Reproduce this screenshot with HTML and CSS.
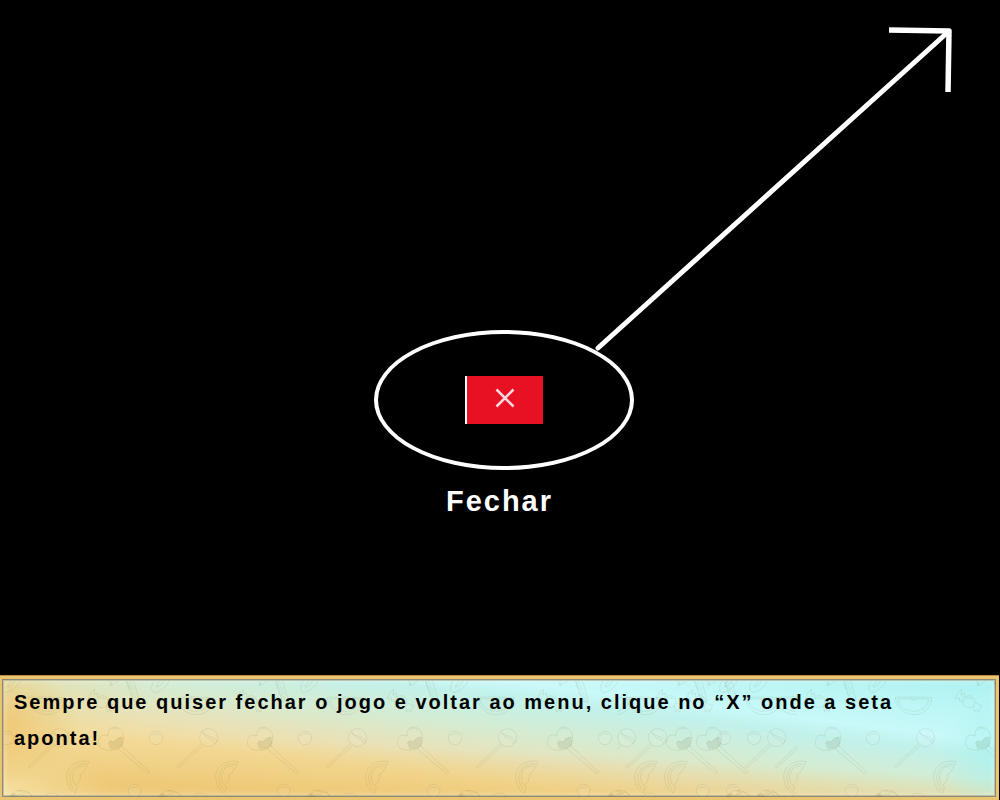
FILE: index.html
```html
<!DOCTYPE html>
<html lang="pt">
<head>
<meta charset="utf-8">
<meta name="viewport" content="width=device-width, initial-scale=1">
<title>Fechar</title>
<link rel="stylesheet" href="styles.css">
</head>
<body>
<main class="screen">
  <svg class="arrow" viewBox="0 0 370 350" aria-hidden="true">
    <path d="M8 338 358 22" stroke-width="5" stroke-linecap="round"/>
    <path d="M299 20 359 21 358 82" stroke-width="5.5" stroke-linejoin="round"/>
  </svg>
  <section class="demo">
    <div class="ring">
      <button class="close" type="button" aria-labelledby="close-label">
        <svg class="cross" viewBox="0 0 20 20" aria-hidden="true"><path d="M1.5 1.5 18.5 18.5M18.5 1.5 1.5 18.5"/></svg>
      </button>
    </div>
    <h1 class="label" id="close-label">Fechar</h1>
  </section>
  <section class="panel">
    <svg class="sweets" aria-hidden="true">
      <defs>
        <clipPath id="clip-left"><rect x="4" y="5" width="793" height="116"/></clipPath>
        <clipPath id="clip-right"><rect x="617" y="5" width="378" height="116"/></clipPath>
        <g id="sweet" transform="scale(.3333) translate(0 -33)">
          <path class="fill" d="M325 236Q330 222 341 232Q349 218 367 216Q372 233 366 246Q359 242 357 252Q350 246 346 254Q340 248 335 254Q328 249 327 242Z"/>
          <path d="M325 204C326 178 363 181 370 209C374 230 366 249 344 254C322 260 293 252 295 231C297 211 310 207 325 213Q322 208 325 204ZM325 236Q330 222 341 232Q349 218 367 216M332 195Q343 183 355 195M354 251 443 326 449 321 365 243"/>
          <circle class="shine" cx="468" cy="219" r="20"/><path d="M455 211Q465 201 478 209"/>
          <circle class="shine" cx="626" cy="218" r="27"/><path d="M607 199C616 219 646 209 650 232M610 204C619 226 640 216 644 237M605 236 532 304 536 309 610 241"/>
          <path d="M268 290C225 281 195 310 201 345C203 363 214 378 226 384L232 367 229 359 238 350 242 335 240 329 249 324ZM260 297C225 292 206 320 210 345Q213 364 223 373M252 303C229 302 214 321 218 342Q219 354 226 361"/>
          <circle class="shine" cx="404" cy="377" r="19"/><path d="M391 371Q402 362 413 368"/>
          <path d="M484 398C484 374 509 370 520 385Q530 371 545 398M503 379Q521 370 544 393M494 397Q505 382 519 390M583 394Q589 380 602 386Q615 381 621 395"/>
          <path class="fill" d="M475 392 482 385 490 384 498 391 496 397H475Z"/>
          <path d="M373 28 395 94Q403 121 418 107L395 28M379 49 402 74M381 61 407 88M390 83 411 101M397 97 416 112M374 36 397 58"/>
          <path d="M456 76C449 55 477 22 501 36C520 49 485 78 469 82Q460 85 456 76ZM469 65Q475 45 492 44Q491 56 475 65Z"/>
          <path d="M325 42 333 62 357 47 344 37M333 62 336 49"/>
          <circle cx="306" cy="110" r="18"/><path d="M293 96 292 84 282 90 284 74 274 81 268 94 264 100 279 101 276 108 289 109M320 122 322 141 330 134 334 142 344 122 326 114M294 102Q304 94 315 101"/>
          <path d="M85 97Q139 94 194 98C191 166 93 166 85 97ZM93 102Q139 99 185 103C180 151 101 151 93 102ZM133 99 136 107 142 107 145 99"/>
        </g>
      </defs>
      <g clip-path="url(#clip-left)">
        <use href="#sweet" x="-149"/><use href="#sweet"/><use href="#sweet" x="149"/><use href="#sweet" x="299"/><use href="#sweet" x="449"/><use href="#sweet" x="598"/><use href="#sweet" x="748"/>
      </g>
      <g clip-path="url(#clip-right)">
        <use href="#sweet" x="418"/><use href="#sweet" x="568"/><use href="#sweet" x="717"/><use href="#sweet" x="867"/>
      </g>
    </svg>
    <p class="message">Sempre que quiser fechar o jogo e voltar ao menu, clique no “X” onde a seta aponta!</p>
  </section>
</main>
</body>
</html>
```
FILE: styles.css
```css
* { box-sizing: border-box; }

body {
  margin: 0;
  background: #000;
  font-family: "Liberation Sans", Arial, sans-serif;
  font-weight: 700;
}

.screen {
  position: relative;
  display: flex;
  flex-direction: column;
  min-height: 100vh;
  padding-right: 1px;
}

.arrow {
  position: absolute;
  top: 10px;
  right: 40px;
  width: 370px;
  fill: none;
  stroke: #fff;
}

.demo {
  flex: 1;
  display: flex;
  flex-direction: column;
  align-items: center;
  justify-content: flex-end;
  padding-bottom: 158px;
}

.ring {
  display: grid;
  place-items: center;
  width: 260px;
  height: 140px;
  margin-left: 8px;
  border: 4px solid #fff;
  border-radius: 50%;
}

.close {
  display: grid;
  place-items: center;
  width: 78px;
  height: 48px;
  padding: 0 0 4px;
  border: 0;
  border-left: 2px solid #fff;
  background: #e81123;
}

.cross {
  width: 20px;
  height: 20px;
  fill: none;
  stroke: #ffd9dc;
  stroke-width: 2.5;
}

.label {
  margin: 15px 0 0;
  color: #fff;
  font-size: 29px;
  line-height: 32px;
  letter-spacing: 2px;
}

.panel {
  position: relative;
  min-height: 125px;
  padding: 8px 14px;
  border: 1px solid #b98b45;
  border-width: 1px 0 0;
  background:
    radial-gradient(ellipse 80px 60px at 0 50px, #efc36acc, #efc36a00),
    radial-gradient(ellipse 110px 50px at 0 115px, #f4dfa0, #f4dfa000),
    radial-gradient(ellipse 150px 100px at 0 0, #e6dca0bb, #e6dca000),
    radial-gradient(ellipse 60px 60px at 100% 80px, #a4f2eeaa, #a4f2ee00),
    linear-gradient(3deg, #ebc166aa 0, #ebc166aa 25px, #ebc16655 48px, #ebc16600 75px),
    linear-gradient(187deg, #a8f1f0 0, #b8f5f4 30px, #c9f9f9 65px, #c2f1ea 82px, #d4ecd3 112px, #e8e2b9 142px, #f4dc9c 168px, #f4dc9c 240px);
}

.panel::before {
  content: "";
  position: absolute;
  inset: 0;
  border: 3px solid #e9c570;
  border-left-width: 2px;
  box-shadow: inset 0 0 0 1px #8c8a76, inset 0 0 0 2px #a7a58a99, inset 0 0 6px 2px #fff6;
}

.sweets {
  position: absolute;
  inset: 0;
  width: 100%;
  height: 100%;
  fill: none;
  stroke: #64602a;
  stroke-opacity: .17;
  stroke-width: 2;
}

.sweets .fill { fill: #65633a; fill-opacity: .12; stroke: none; }
.sweets .shine { fill: #fff; fill-opacity: .06; }

.message {
  position: relative;
  margin: 0;
  color: #000;
  font-size: 20px;
  line-height: 36px;
  letter-spacing: 2px;
}
```
